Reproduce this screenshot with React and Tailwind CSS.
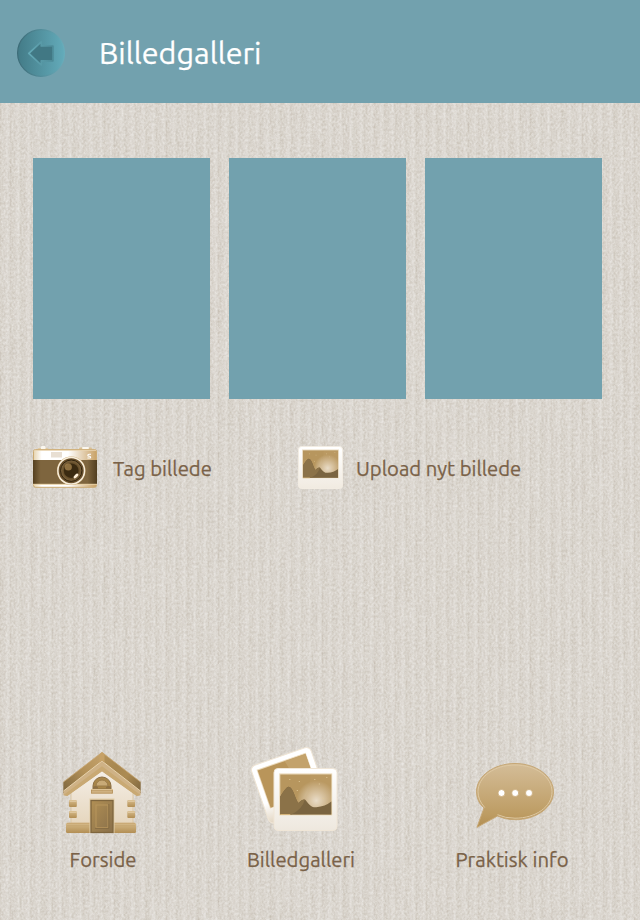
import React from 'react';

function PaperTexture() {
  return (
    <svg className="absolute inset-0 -z-10 h-full w-full" aria-hidden="true">
      <defs>
        <linearGradient id="rib" gradientUnits="userSpaceOnUse" x1="0" y1="0" x2="10.4" y2="0" spreadMethod="repeat">
          <stop offset="0" stopColor="#d6d0c8" />
          <stop offset="0.12" stopColor="#d9d4cc" />
          <stop offset="0.5" stopColor="#dbd6cf" />
          <stop offset="0.75" stopColor="#e0dcd6" />
          <stop offset="1" stopColor="#d8d3cb" />
        </linearGradient>
        <filter id="grain" x="0" y="0" width="100%" height="100%" colorInterpolationFilters="sRGB">
          <feTurbulence type="fractalNoise" baseFrequency="0.5 0.38" numOctaves="2" seed="4" />
          <feColorMatrix values="0.48 0 0 0 0.26  0.48 0 0 0 0.26  0.48 0 0 0 0.26  0 0 0 0 1" />
        </filter>
        <filter id="fibre" x="0" y="0" width="100%" height="100%" colorInterpolationFilters="sRGB">
          <feTurbulence type="fractalNoise" baseFrequency="0.14 0.03" numOctaves="2" seed="9" />
          <feColorMatrix values="0 0.1 0 0 0.45  0 0.1 0 0 0.45  0 0.1 0 0 0.45  0 0 0 0 1" />
        </filter>
      </defs>
      <rect width="100%" height="100%" fill="url(#rib)" />
      <rect width="100%" height="100%" filter="url(#grain)" className="mix-blend-overlay" />
      <rect width="100%" height="100%" filter="url(#fibre)" className="mix-blend-overlay" />
    </svg>
  );
}

function BackButton() {
  return (
    <button aria-label="Tilbage" className="block h-12 w-12">
      <svg width="48" height="48" viewBox="0 0 48 48">
        <defs>
          <linearGradient id="disc"><stop stopColor="#437b87" /><stop offset="1" stopColor="#63abba" /></linearGradient>
          <linearGradient id="discRim"><stop stopColor="#3c6b77" /><stop offset="1" stopColor="#68adbb" /></linearGradient>
          <linearGradient id="arrowRim"><stop stopColor="#65aab7" /><stop offset="1" stopColor="#4d8b98" /></linearGradient>
        </defs>
        <circle cx="24" cy="24" r="23.4" fill="url(#disc)" stroke="url(#discRim)" strokeWidth="1.2" />
        <path d="M11.8 24.4 24.3 12.8V17H35.9V31.8H24.3V36Z" fill="#417884" stroke="url(#arrowRim)" strokeWidth="1.7" strokeLinejoin="round" />
      </svg>
    </button>
  );
}

function CameraIcon() {
  return (
    <svg width="64" height="43" viewBox="0 0 64 43" className="shrink-0">
      <defs>
        <linearGradient id="camTop"><stop stopColor="#e6d3ae" /><stop offset=".13" stopColor="#fff" /><stop offset=".55" stopColor="#fff" /><stop offset="1" stopColor="#c9a267" /></linearGradient>
        <linearGradient id="camBody"><stop stopColor="#55401f" /><stop offset=".12" stopColor="#7e653e" /><stop offset=".85" stopColor="#7e653e" /><stop offset="1" stopColor="#513e20" /></linearGradient>
        <radialGradient id="lens"><stop stopColor="#392910" /><stop offset=".55" stopColor="#56401e" /><stop offset="1" stopColor="#806640" /></radialGradient>
      </defs>
      <rect x="5" y="2" width="10" height="2.5" rx=".5" fill="#e0cba4" />
      <rect x="8" y="0" width="4.5" height="4" rx="1" fill="#faf6ee" />
      <rect x="46" y="1.5" width="13" height="3" rx="1" fill="#d9c197" />
      <rect x="49" y="1" width="7" height="2" rx="1" fill="#fbf7ef" />
      <rect x=".5" y="3.5" width="63" height="37.8" rx="2" fill="url(#camTop)" stroke="#cbaa72" />
      <path d="M1 4.3H63" stroke="#e8d3ae" />
      <rect x="18" y="6" width="11" height="5.5" fill="#e8dfd3" />
      <rect y="14" width="64" height="24" fill="url(#camBody)" />
      <path d="M0 38.3H64" stroke="#e8d1a5" />
      <path d="M58 8.2H56Q54.8 8.2 54.8 9.2T56 10.2H56.6Q57.6 10.2 57.6 11.2T56.5 12H54.4" fill="none" stroke="#fff" strokeWidth="1.1" />
      <circle cx="38.2" cy="24.7" r="14.3" fill="#c8a66f" />
      <circle cx="38.2" cy="24.7" r="13.3" fill="#6b512d" stroke="#f7edda" strokeWidth="1.5" />
      <circle cx="38.2" cy="24.7" r="10.7" fill="url(#lens)" stroke="#30230d" strokeWidth="1" />
      <circle cx="38.2" cy="24.7" r="7.3" fill="#3a2a11" />
      <circle cx="35.3" cy="21" r="3.6" fill="#a98750" opacity=".75" />
      <ellipse cx="43" cy="30" rx="3" ry="1.5" fill="#fff0d9" transform="rotate(-42 43 30)" />
    </svg>
  );
}

function Landscape({ id }) {
  return (
    <>
      <defs>
        <radialGradient id={id} gradientUnits="userSpaceOnUse" cx="36" cy="26" r="20"><stop stopColor="#f0e8da" /><stop offset=".3" stopColor="#e0cfb3" /><stop offset="1" stopColor="#b7965e" /></radialGradient>
      </defs>
      <rect width="51" height="40" fill={`url(#${id})`} />
      <path d="M30 0Q30 20 20 28L16 40H51V0Z" fill="#c5a874" opacity=".18" />
      <path d="M0 22Q6 12 8.5 12.3C13 13 15 25 18 28.5Q23 24 25 25.3C30 32 32 33 36 32.7Q45 32 51 27V40H0Z" fill="#7a6440" />
      <path d="M0 22Q6 12 8.5 12.3C13 13 15 25 18 28.5Q23 24 24.5 25.3Q22 35 11 40H0Z" fill="#8b7248" />
      <path d="M0 40H10" stroke="#d6b57b" />
      <path d="M9 5h1M18.5 7h1M34 5h1M38.5 9.5h1M42.5 24h1M16.5 16h1M46 3h1" stroke="#dfc797" />
    </>
  );
}

function PhotoIcon() {
  return (
    <svg width="45" height="43" viewBox="0 0 45 43" className="shrink-0">
      <defs><linearGradient id="smallPaper" x2="0" y2="1"><stop stopColor="#fff" /><stop offset="1" stopColor="#f1ebe1" /></linearGradient></defs>
      <rect x=".5" y=".5" width="44" height="42" rx="3" fill="url(#smallPaper)" stroke="#f2ece2" />
      <rect x="4" y="3.5" width="37" height="28.7" fill="#eadcc3" />
      <g transform="translate(5 4.4) scale(.686)"><Landscape id="smallSun" /></g>
    </svg>
  );
}

function HouseIcon() {
  return (
    <svg width="78" height="82" viewBox="0 0 78 82">
      <defs>
        <linearGradient id="roofLeft" gradientUnits="userSpaceOnUse" x1="39" y1="5" x2="0" y2="38"><stop stopColor="#c2a06a" /><stop offset=".45" stopColor="#b39158" /><stop offset="1" stopColor="#80683f" /></linearGradient>
        <linearGradient id="roofRight" gradientUnits="userSpaceOnUse" x1="39" y1="5" x2="78" y2="38"><stop stopColor="#b39158" /><stop offset=".35" stopColor="#a78750" /><stop offset=".6" stopColor="#ac8b53" /><stop offset="1" stopColor="#80683f" /></linearGradient>
        <linearGradient id="wall" x2="0" y2="1"><stop stopColor="#f6f1ea" /><stop offset="1" stopColor="#e5d5bc" /></linearGradient>
        <linearGradient id="stone" x2="0" y2="1"><stop stopColor="#d7bc8c" /><stop offset="1" stopColor="#b38f54" /></linearGradient>
        <linearGradient id="door" x2="1" y2="1"><stop stopColor="#b18f54" /><stop offset="1" stopColor="#89704a" /></linearGradient>
      </defs>
      <path d="M8 37 39 14 70 37V74H8Z" fill="url(#wall)" stroke="#dbc7a5" />
      <path d="M.3 30 39 .2V10L.3 41.5Z" fill="url(#roofLeft)" />
      <path d="M77.7 30 39 .2V10L77.7 41.5Z" fill="url(#roofRight)" />
      <path d="M.5 30 39 .4 77.5 30" stroke="#c9a876" strokeWidth=".8" fill="none" />
      <path d="M.5 39 39 9 77.5 39V43.2L73.8 44 39 19.3 4.2 44 .5 43.2Z" fill="#cfb286" />
      <path d="M.5 43 39 14.2 77.5 43 73.8 44 39 19.3 4.2 44Z" fill="#c9a973" />
      <path d="M.5 39 39 9 77.5 39" stroke="#e6d1ab" fill="none" />
      <path d="M36.5 2.2 39 .3 41.5 2.2V10.5L39 8.7 36.5 10.5Z" fill="#c6a167" />
      <path d="M30 37V34A9 9 0 0 1 48 34V37Z" fill="#a88649" stroke="#8d7045" />
      <path d="M33 34A6 6 0 0 1 45 34Z" fill="#c8aa77" stroke="#9b7c4b" />
      <path d="M30 36.5V35Q32.5 33 35 35V36.5ZM43 36.5V35Q45.5 33 48 35V36.5Z" fill="#8d7045" />
      <rect x="28.5" y="38" width="21" height="3.2" fill="#cfb181" stroke="#b28d53" strokeWidth=".8" />
      <path d="M28 37.5H50" stroke="#dcc194" />
      {[[6, 48], [6, 59], [64.3, 48], [64.3, 59]].map(([x, y]) => (
        <g key={`${x}-${y}`}>
          <rect x={x} y={y} width="7.8" height="7" rx="1" fill="url(#stone)" />
          <path d={`M${x + 0.5} ${y + 1.2}h7`} stroke="#e5d0aa" />
        </g>
      ))}
      <rect x="3" y="70.7" width="70" height="10.2" rx="1.5" fill="url(#stone)" />
      <path d="M4 71.3H72M4 73.8H72" stroke="#c7a772" />
      <rect x="26.5" y="46.5" width="25" height="34.4" fill="#e2cda8" />
      <rect x="28" y="48.5" width="22" height="32" fill="url(#door)" stroke="#7f663e" strokeWidth="1.3" />
      <rect x="33" y="53" width="12" height="22.5" fill="none" stroke="#b8965c" />
      <path d="M32 76.3H45.8V52" fill="none" stroke="#80673f" strokeWidth=".8" />
    </svg>
  );
}

function GalleryIcon() {
  return (
    <svg width="88" height="86" viewBox="0 0 88 86">
      <defs>
        <linearGradient id="paper" x2="0" y2="1"><stop stopColor="#fff" /><stop offset="1" stopColor="#eee8de" /></linearGradient>
        <linearGradient id="backPaper" x2="0" y2="1"><stop offset=".65" stopColor="#fff" /><stop offset="1" stopColor="#e2d5c1" /></linearGradient>
      </defs>
      <g transform="translate(-.6 20.5) rotate(-19.2)">
        <rect x=".5" y=".5" width="63" height="61" rx="5" fill="url(#backPaper)" stroke="#efe5d5" />
        <rect x="5.7" y="5.5" width="52" height="41" fill="#ead8b9" />
        <rect x="6.5" y="6.5" width="50.5" height="39.5" fill="#b9955a" />
        <path d="M35 6.5H57V46H35Q41 27 35 6.5Z" fill="#c3a26b" />
      </g>
      <rect x="24" y="22.5" width="63" height="62" rx="4" fill="url(#paper)" stroke="#f0e6d7" />
      <rect x="29.2" y="27.4" width="53" height="42" fill="#ead9ba" />
      <g transform="translate(30.3 28.5)"><Landscape id="largeSun" /></g>
    </svg>
  );
}

function SpeechIcon() {
  return (
    <svg width="78" height="66" viewBox="0 0 78 66">
      <defs><linearGradient id="speech" x2="0" y2="1"><stop stopColor="#d4bd98" /><stop offset=".8" stopColor="#bd9c63" /><stop offset="1" stopColor="#b28e51" /></linearGradient></defs>
      <path d="M39 .5C60 .5 77.5 13 77.5 28.8S60 56.7 39 56.7Q29 56.7 21.5 53L1 64.3 8 45Q.5 38.5.5 28.8C.5 13 18 .5 39 .5Z" fill="url(#speech)" stroke="#c6a775" />
      <path d="M8.8 44.6Q2 37 2 28.8C2 14 18 2 39 2S76 14 76 28.8 60 55.2 39 55.2Q29 55.2 21.5 51.7" fill="none" stroke="#dec8a2" strokeWidth="1" />
      {[25.5, 39.2, 53].map((x) => <circle key={x} cx={x} cy="30" r="3.5" fill="#fff" stroke="#caab78" strokeWidth=".8" />)}
    </svg>
  );
}

export default function App() {
  return (
    <div className="relative isolate flex h-[920px] w-[640px] flex-col overflow-hidden bg-[#d9d4cc] font-['Ubuntu','Noto_Sans',sans-serif] text-[#7a6248] [-webkit-text-stroke:0.25px_currentColor]">
      <PaperTexture />
      <header className="flex h-[103px] shrink-0 items-center gap-[34px] bg-[#72a1ae] pt-[3px] pl-[17px]">
        <BackButton />
        <h1 className="text-[30.5px] leading-[42px] whitespace-nowrap text-white">Billedgalleri</h1>
      </header>
      <main className="flex flex-1 flex-col pt-[55px]">
        <section className="flex gap-[19px] pl-[33px]">
          <div className="h-[241px] w-[177px] bg-[#72a1ae]" />
          <div className="h-[241px] w-[177px] bg-[#72a1ae]" />
          <div className="h-[241px] w-[177px] bg-[#72a1ae]" />
        </section>
        <section className="mt-[47px] flex h-[43px] pl-[33px] text-[20.3px] leading-[28px] whitespace-nowrap">
          <button className="flex w-[265px] items-center gap-4"><CameraIcon /><span className="pt-[2px]">Tag billede</span></button>
          <button className="flex items-center gap-[13px]"><PhotoIcon /><span className="pt-[2px]">Upload nyt billede</span></button>
        </section>
      </main>
      <nav className="flex h-[174px] shrink-0 text-[20.3px] leading-[28px] whitespace-nowrap">
        <a className="ml-[43px] flex w-[118px] flex-col items-center pt-[6px]"><HouseIcon /><span className="mt-[12px] pl-[2px]">Forside</span></a>
        <a className="ml-[70px] flex w-[140px] flex-col items-center"><span className="mr-[15px]"><GalleryIcon /></span><span className="mt-[14px]">Billedgalleri</span></a>
        <a className="ml-[71px] flex w-[140px] flex-col items-center pt-[17px]"><span className="ml-[6px]"><SpeechIcon /></span><span className="mt-[17px]">Praktisk info</span></a>
      </nav>
    </div>
  );
}
